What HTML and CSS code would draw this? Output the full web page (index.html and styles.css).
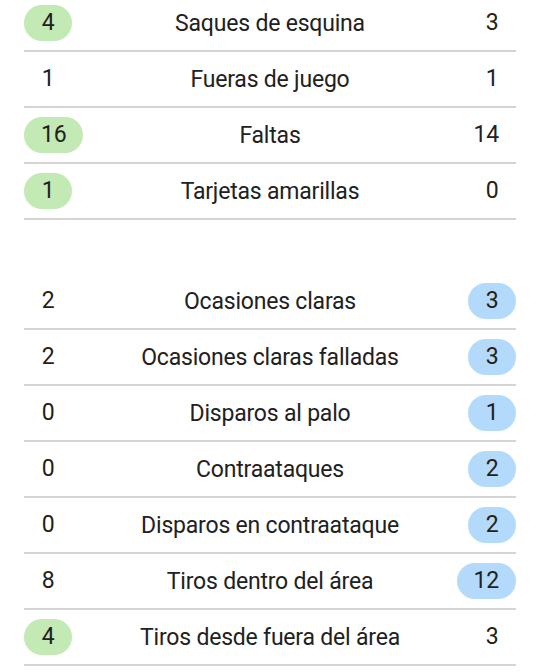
FILE: index.html
```html
<!DOCTYPE html>
<html lang="es">
<head>
<meta charset="utf-8">
<link rel="stylesheet" href="styles.css">
</head>
<body>
<div class="stats">
  <div class="group group-first">
    <div class="row"><span class="val win-home">4</span><span class="label">Saques de esquina</span><span class="val right">3</span></div>
    <div class="row"><span class="val">1</span><span class="label">Fueras de juego</span><span class="val right">1</span></div>
    <div class="row"><span class="val win-home">16</span><span class="label">Faltas</span><span class="val right">14</span></div>
    <div class="row"><span class="val win-home">1</span><span class="label">Tarjetas amarillas</span><span class="val right">0</span></div>
  </div>
  <div class="group">
    <div class="row"><span class="val">2</span><span class="label">Ocasiones claras</span><span class="val right win-away">3</span></div>
    <div class="row"><span class="val">2</span><span class="label">Ocasiones claras falladas</span><span class="val right win-away">3</span></div>
    <div class="row"><span class="val">0</span><span class="label">Disparos al palo</span><span class="val right win-away">1</span></div>
    <div class="row"><span class="val">0</span><span class="label">Contraataques</span><span class="val right win-away">2</span></div>
    <div class="row"><span class="val">0</span><span class="label">Disparos en contraataque</span><span class="val right win-away">2</span></div>
    <div class="row"><span class="val">8</span><span class="label">Tiros dentro del área</span><span class="val right win-away">12</span></div>
    <div class="row"><span class="val win-home">4</span><span class="label">Tiros desde fuera del área</span><span class="val right">3</span></div>
  </div>
</div>
</body>
</html>
```

FILE: styles.css
```css
html, body {
  margin: 0;
  padding: 0;
  background: #ffffff;
}
body {
  font-family: Roboto, "Noto Sans", "Liberation Sans", sans-serif;
  color: #212121;
  font-size: 23px;
  letter-spacing: -0.2px;
  overflow: hidden;
}
.stats {
  margin: -4px 24px 0 24px;
}
.group + .group {
  margin-top: 54px;
}
.row {
  display: grid;
  grid-template-columns: 1fr auto 1fr;
  align-items: center;
  height: 54px;
  border-bottom: 2px solid #d4d4d4;
}
.label {
  text-align: center;
  white-space: nowrap;
}
.val {
  justify-self: start;
  min-width: 48px;
  box-sizing: border-box;
  height: 36px;
  line-height: 36px;
  padding: 0 17px;
  border-radius: 18px;
  text-align: center;
}
.val.right {
  justify-self: end;
}
.win-home {
  background: #c3e9b4;
}
.win-away {
  background: #b3d9fb;
}
```
